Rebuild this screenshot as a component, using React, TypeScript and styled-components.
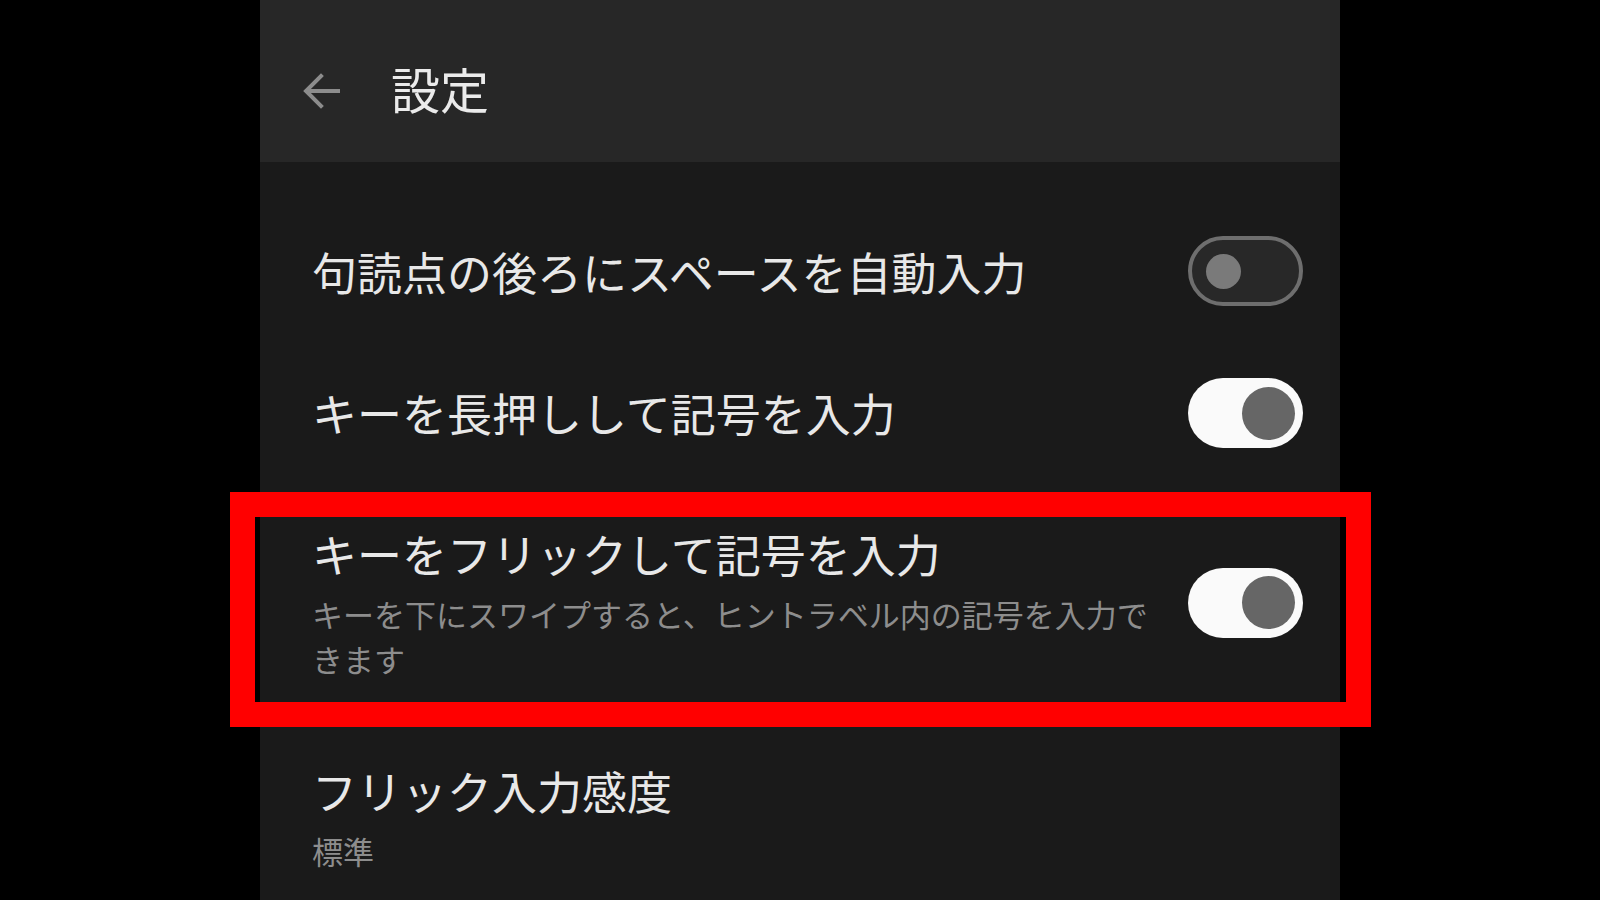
import * as React from "react";
import styled, { createGlobalStyle } from "styled-components";

const GlobalStyle = createGlobalStyle`
  html, body {
    margin: 0;
    padding: 0;
    background: #000;
  }
  body {
    font-family: "Noto Sans CJK JP", "Noto Sans", sans-serif;
  }
`;

const Screen = styled.div`
  width: 1080px;
  min-height: 900px;
  margin: 0 auto;
  background: #1a1a1a;
  display: flex;
  flex-direction: column;
`;

const Header = styled.header`
  height: 162px;
  box-sizing: border-box;
  background: #272727;
  display: flex;
  align-items: center;
  padding: 18px 0 0 42px;
  gap: 51px;
  flex-shrink: 0;
`;

const BackButton = styled.button`
  width: 38px;
  height: 38px;
  padding: 0;
  border: none;
  background: transparent;
  display: flex;
  align-items: center;
  justify-content: center;
  margin-top: 1px;
`;

const HeaderTitle = styled.h1`
  margin: -6px 0 0;
  font-size: 49px;
  font-weight: 400;
  color: #ebebeb;
  line-height: 1;
`;

const List = styled.div`
  padding-top: 40px;
  display: flex;
  flex-direction: column;
`;

const Row = styled.div`
  position: relative;
  box-sizing: border-box;
  padding: 36px 37px 36px 52px;
  display: flex;
  align-items: center;
  gap: 24px;
`;

const Texts = styled.div`
  flex: 1;
  padding: 4px 0;
  display: flex;
  flex-direction: column;
`;

const Title = styled.div`
  font-size: 45px;
  line-height: 60px;
  color: #e8e8e8;
`;

const Summary = styled.div`
  margin-top: 7px;
  font-size: 31px;
  line-height: 45px;
  color: #8d8d8d;
`;

const Track = styled.div<{ $on: boolean }>`
  width: 115px;
  height: 70px;
  box-sizing: border-box;
  border-radius: 35px;
  flex-shrink: 0;
  display: flex;
  align-items: center;
  justify-content: ${(p) => (p.$on ? "flex-end" : "flex-start")};
  padding: ${(p) => (p.$on ? "0 8px 0 0" : "0 0 0 14px")};
  background: ${(p) => (p.$on ? "#fafafa" : "#282828")};
  border: ${(p) => (p.$on ? "none" : "4px solid #6e6e6e")};
  margin-top: ${(p) => (p.$on ? "0" : "-2px")};
`;

const Knob = styled.div<{ $on: boolean }>`
  width: ${(p) => (p.$on ? "53px" : "35px")};
  height: ${(p) => (p.$on ? "53px" : "35px")};
  border-radius: 50%;
  background: ${(p) => (p.$on ? "#666666" : "#7a7a7a")};
`;

const Highlight = styled.div`
  position: absolute;
  top: 8px;
  left: -30px;
  right: -31px;
  bottom: -6px;
  border: 25px solid #ff0000;
  pointer-events: none;
`;

const Switch = ({ on }: { on: boolean }) => (
  <Track $on={on}>
    <Knob $on={on} />
  </Track>
);

const BackArrow = () => (
  <svg width="38" height="38" viewBox="0 0 38 38" fill="none">
    <path
      d="M36 19H5M19 4L4 19L19 34"
      stroke="#8c8c8c"
      strokeWidth="4"
      strokeLinecap="square"
      strokeLinejoin="miter"
    />
  </svg>
);

type Pref = {
  title: string;
  summary?: string;
  toggle?: boolean;
  highlight?: boolean;
};

const prefs: Pref[] = [
  { title: "句読点の後ろにスペースを自動入力", toggle: false },
  { title: "キーを長押しして記号を入力", toggle: true },
  {
    title: "キーをフリックして記号を入力",
    summary: "キーを下にスワイプすると、ヒントラベル内の記号を入力できます",
    toggle: true,
    highlight: true,
  },
  { title: "フリック入力感度", summary: "標準" },
];

const App = () => {
  return (
    <>
      <GlobalStyle />
      <Screen>
        <Header>
          <BackButton aria-label="戻る">
            <BackArrow />
          </BackButton>
          <HeaderTitle>設定</HeaderTitle>
        </Header>
        <List>
          {prefs.map((p) => (
            <Row key={p.title}>
              <Texts>
                <Title>{p.title}</Title>
                {p.summary && <Summary>{p.summary}</Summary>}
              </Texts>
              {p.toggle !== undefined && <Switch on={p.toggle} />}
              {p.highlight && <Highlight />}
            </Row>
          ))}
        </List>
      </Screen>
    </>
  );
};

export default App;
